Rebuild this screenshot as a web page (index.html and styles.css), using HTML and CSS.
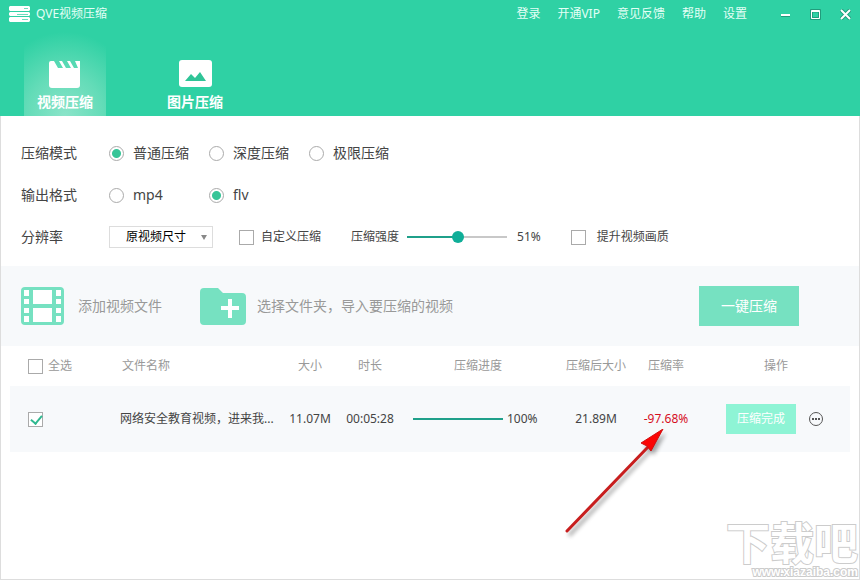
FILE: index.html
```html
<!DOCTYPE html>
<html lang="zh-CN">
<head>
    <meta charset="UTF-8">
    <meta name="viewport" content="width=device-width, initial-scale=1.0">
    <title>QVE视频压缩</title>
    <link rel="stylesheet" href="styles.css">
</head>
<body>
    <div class="window">
        <header class="header">
            <div class="title-bar">
                <svg class="logo" width="21" height="16" viewBox="0 0 21 16">
                    <path fill="#fff" d="M1 0h19l1 1v3l-1 1H1L0 4V1zM1 6h19l1 1v2l-1 1H1L0 9V7zM1 11h19l1 1v3l-1 1H1l-1-1v-3z"/>
                    <path stroke="#6fdcbc" d="M15 2.500h4M8 8.500h11M13 13.500h6"/>
                </svg>
                <span class="app-name">QVE视频压缩</span>
                <nav class="menu">
                    <a href="#">登录</a>
                    <a href="#">开通VIP</a>
                    <a href="#">意见反馈</a>
                    <a href="#">帮助</a>
                    <a href="#">设置</a>
                </nav>
                <div class="window-buttons">
                    <button type="button" aria-label="最小化">
                        <svg width="11" height="11" viewBox="0 0 11 11"><path stroke="#229c7c" d="M1 7.500h9"/><path stroke="#fff" stroke-width="2" d="M1 6h9"/></svg>
                    </button>
                    <button type="button" aria-label="最大化">
                        <svg width="11" height="11" viewBox="0 0 11 11"><path fill="none" stroke="#229c7c" d="M.5.5h10v10H.5zM2.500 3h6v5.500h-6z"/><path fill="none" stroke="#fff" d="M1.500 1.500h8v8h-8zM1 2.500h9"/></svg>
                    </button>
                    <button type="button" aria-label="关闭">
                        <svg width="11" height="11" viewBox="0 0 11 11"><path stroke="#229c7c" stroke-width="4" d="M1 1l9 9M10 1l-9 9"/><path stroke="#fff" stroke-width="2" d="M1 1l9 9M10 1l-9 9"/></svg>
                    </button>
                </div>
            </div>
            <div class="tabs">
                <button type="button" class="tab active">
                    <svg width="32" height="28" viewBox="0 0 32 28">
                        <path fill="#fff" d="M2 1h3l4 7h5l-4-7h3l4 7h5l-4-7h3l4 7h4l-3-7h5v24q0 3-3 3H3q-3 0-3-3V3q0-2 2-2z"/>
                    </svg>
                    <span>视频压缩</span>
                </button>
                <button type="button" class="tab">
                    <svg width="33" height="28" viewBox="0 0 33 28">
                        <rect width="33" height="27" rx="3" fill="#fff"/>
                        <path fill="#2fc497" d="M6 21l6-7 4 4 5-6 6 9z"/>
                    </svg>
                    <span>图片压缩</span>
                </button>
            </div>
        </header>

        <form class="settings">
            <div class="setting-row">
                <span class="setting-name">压缩模式</span>
                <label class="radio-option"><input type="radio" name="mode" checked>普通压缩</label>
                <label class="radio-option"><input type="radio" name="mode">深度压缩</label>
                <label class="radio-option"><input type="radio" name="mode">极限压缩</label>
            </div>
            <div class="setting-row">
                <span class="setting-name">输出格式</span>
                <label class="radio-option"><input type="radio" name="format">mp4</label>
                <label class="radio-option"><input type="radio" name="format" checked>flv</label>
            </div>
            <div class="setting-row">
                <label class="setting-name" for="resolution">分辨率</label>
                <div class="select-box">
                    <select id="resolution">
                        <option>原视频尺寸</option>
                    </select>
                </div>
                <label class="check-option custom"><input type="checkbox">自定义压缩</label>
                <div class="strength">
                    <label for="strength">压缩强度</label>
                    <input type="range" id="strength" min="0" max="100" value="51">
                    <output for="strength">51%</output>
                </div>
                <label class="check-option quality"><input type="checkbox">提升视频画质</label>
            </div>
        </form>

        <div class="actions">
            <button type="button" class="add-button">
                <svg width="43" height="38" viewBox="0 0 43 38">
                    <rect width="43" height="38" rx="4" fill="#76e1c1"/>
                    <path fill="#fff" d="M12 3h19v14H12zM12 21h19v14H12zM3 3h5v6H3zM3 12h5v5H3zM3 21h5v5H3zM3 29h5v6H3zM35 3h5v6h-5zM35 12h5v5h-5zM35 21h5v5h-5zM35 29h5v6h-5z"/>
                </svg>
                添加视频文件
            </button>
            <button type="button" class="add-button folder">
                <svg width="46" height="38" viewBox="0 0 46 38">
                    <path fill="#76e1c1" d="M4 1h14l5 5h19q4 0 4 4v24q0 4-4 4H4q-4 0-4-4V5q0-4 4-4z"/>
                    <path fill="#fff" d="M28 12h4v7h7v4h-7v8h-4v-8h-7v-4h7z"/>
                </svg>
                选择文件夹，导入要压缩的视频
            </button>
            <button type="button" class="start-button">一键压缩</button>
        </div>

        <table class="file-table">
            <colgroup>
                <col class="col-check">
                <col class="col-name">
                <col class="col-size">
                <col class="col-time">
                <col class="col-progress">
                <col class="col-after">
                <col class="col-rate">
                <col class="col-action">
            </colgroup>
            <thead>
                <tr>
                    <th class="check-cell"><label class="check-option"><input type="checkbox">全选</label></th>
                    <th class="name-cell">文件名称</th>
                    <th>大小</th>
                    <th>时长</th>
                    <th>压缩进度</th>
                    <th>压缩后大小</th>
                    <th>压缩率</th>
                    <th class="action-cell">操作</th>
                </tr>
            </thead>
            <tbody>
                <tr>
                    <td class="check-cell"><label class="check-option"><input type="checkbox" aria-label="网络安全教育视频" checked></label></td>
                    <td class="name-cell">网络安全教育视频，进来我...</td>
                    <td>11.07M</td>
                    <td>00:05:28</td>
                    <td>
                        <div class="progress">
                            <div class="progress-track"><div class="progress-bar" style="width: 100%"></div></div>
                            <span>100%</span>
                        </div>
                    </td>
                    <td>21.89M</td>
                    <td class="rate">
                        -97.68%
                        <svg class="arrow" width="110" height="116" viewBox="0 0 110 116">
                            <path class="arrow-shadow" d="M1 101L82 17l-5-3L99 0 87 22l-3-3L3 104z"/>
                            <path stroke="#c81e1e" stroke-width="3" stroke-linecap="round" d="M3 102L84 18"/>
                            <path fill="#fb0505" stroke="#d01010" d="M99 0L77 14l6 3 4 5z"/>
                        </svg>
                    </td>
                    <td>
                        <div class="row-actions">
                            <button type="button" class="done-button">压缩完成</button>
                            <button type="button" class="more-button" aria-label="更多">
                                <svg width="16" height="16" viewBox="0 0 16 16">
                                    <circle cx="8" cy="8" r="6.500" fill="none" stroke="#555"/>
                                    <path fill="#555" d="M4 7h2v2H4zM7 7h2v2H7zM10 7h2v2h-2z"/>
                                </svg>
                            </button>
                        </div>
                    </td>
                </tr>
            </tbody>
        </table>

        <div class="watermark">
            <div class="watermark-name">下载吧</div>
            <div class="watermark-url">www.xiazaiba.com</div>
        </div>
    </div>
</body>
</html>
```

FILE: styles.css
```css
* {
    box-sizing: border-box;
}

body {
    margin: 0;
    font-family: "Noto Sans", "Noto Sans CJK SC", sans-serif;
    font-size: 12px;
    line-height: 20px;
    color: #444;
    background-color: #fff;
}

button {
    padding: 0;
    border: none;
    background: none;
    font: inherit;
    color: inherit;
    cursor: pointer;
}

svg {
    display: block;
}

.window {
    position: relative;
    min-height: 100vh;
    border: 1px solid #ddd;
    border-top: none;
}

/* Header */
.header {
    margin: 0 -1px;
    color: #fff;
    background-color: #2fd1a4;
}

.title-bar {
    display: flex;
    align-items: center;
    height: 28px;
    padding-left: 9px;
}

.app-name {
    margin-left: 6px;
    color: #e4fff6;
}

.menu {
    display: flex;
    gap: 17px;
    margin-left: auto;
    margin-right: 23px;
}

.menu a {
    color: #e4fff6;
    text-decoration: none;
}

.window-buttons {
    display: flex;
}

.window-buttons button {
    display: flex;
    justify-content: center;
    width: 30px;
}

.tabs {
    display: flex;
    gap: 48px;
    padding-left: 24px;
}

.tab {
    display: flex;
    flex-direction: column;
    align-items: center;
    gap: 4px;
    width: 82px;
    height: 88px;
    padding-top: 32px;
    font-size: 14px;
    font-weight: bold;
}

.tab.active {
    background: radial-gradient(ellipse 76px 84px at 50% 100%, #8be4c9, #64dcb8 50%, rgba(47, 209, 164, 0));
}

/* Settings */
.settings {
    padding: 16px 20px 8px;
}

.setting-row {
    display: flex;
    align-items: center;
    height: 42px;
}

.setting-name {
    width: 88px;
    font-size: 14px;
}

.radio-option {
    display: flex;
    align-items: center;
    gap: 9px;
    width: 100px;
    font-size: 14px;
}

input[type="radio"],
input[type="checkbox"] {
    appearance: none;
    flex: none;
    width: 15px;
    height: 15px;
    margin: 0;
    border: 1px solid #aaa;
    background-color: #fff;
}

input[type="radio"] {
    border-radius: 50%;
}

input[type="radio"]:checked {
    background: radial-gradient(circle, #38c598 4px, #fff 5px);
}

input[type="checkbox"]:checked::before {
    content: "";
    display: block;
    width: 5px;
    height: 9px;
    margin: 0 0 0 4px;
    border: solid #2fb890;
    border-width: 0 2px 2px 0;
    transform: rotate(40deg);
}

.check-option {
    display: flex;
    align-items: center;
    gap: 7px;
}

.select-box {
    position: relative;
    width: 104px;
}

.select-box::after {
    content: "";
    position: absolute;
    top: 9px;
    right: 6px;
    border: 3px solid transparent;
    border-top: 5px solid #888;
    border-bottom: none;
}

select {
    appearance: none;
    display: block;
    width: 100%;
    height: 22px;
    padding: 0 16px;
    border: 1px solid #ddd;
    border-radius: 0;
    background-color: #fff;
    color: #000;
    font: inherit;
}

.custom {
    margin-left: 26px;
}

.strength {
    display: flex;
    align-items: center;
    margin-left: 30px;
}

.strength output {
    margin-left: 10px;
}

input[type="range"] {
    appearance: none;
    width: 100px;
    height: 12px;
    margin: 0 0 0 8px;
    background: linear-gradient(to right, #1fa08a 51%, #c8c8c8 51%) center / 100% 2px no-repeat;
}

input[type="range"]::-webkit-slider-thumb {
    appearance: none;
    width: 12px;
    height: 12px;
    border-radius: 50%;
    background-color: #0fae98;
}

.quality {
    gap: 11px;
    margin-left: 30px;
}

/* Add files / start */
.actions {
    display: flex;
    align-items: center;
    height: 80px;
    padding: 0 60px 0 20px;
    background-color: #f7f9fb;
}

.add-button {
    display: flex;
    align-items: center;
    gap: 14px;
    font-size: 14px;
    color: #999;
}

.folder {
    gap: 11px;
    margin-left: 38px;
}

.start-button {
    width: 100px;
    height: 40px;
    margin-left: auto;
    font-size: 14px;
    color: #fff;
    background-color: #76e1c1;
}

/* File list */
.file-table {
    width: calc(100% - 18px);
    margin: 0 9px;
    table-layout: fixed;
    border-collapse: collapse;
}

.col-check {
    width: 110px;
}

.col-size,
.col-time,
.col-rate {
    width: 60px;
}

.col-progress {
    width: 156px;
}

.col-after {
    width: 80px;
}

.col-action {
    width: 154px;
}

th,
td {
    padding: 0;
    text-align: center;
    white-space: nowrap;
}

th {
    height: 40px;
    font-weight: normal;
    color: #999;
}

td {
    height: 66px;
    background-color: #f7f9fb;
}

.check-cell {
    padding-left: 18px;
}

.check-cell .check-option {
    gap: 5px;
}

.name-cell {
    text-align: left;
}

th.name-cell {
    padding-left: 2px;
}

.action-cell {
    padding-left: 6px;
}

.progress {
    display: flex;
    align-items: center;
    gap: 4px;
    padding-left: 13px;
}

.progress-track {
    width: 90px;
    background-color: #ccc;
}

.progress-bar {
    height: 2px;
    background-color: #1fa08a;
}

.rate {
    position: relative;
    color: #d60f1f;
}

.arrow {
    position: absolute;
    top: 43px;
    left: -72px;
    z-index: 1;
}

.arrow-shadow {
    fill: #000;
    opacity: 0.35;
    transform: translate(3px, 4px);
    filter: blur(2px);
}

.row-actions {
    display: flex;
    align-items: center;
    gap: 12px;
    padding-left: 30px;
}

.done-button {
    width: 70px;
    height: 30px;
    color: #fff;
    background-color: #8ef4d5;
}

/* Site mark over the bottom corner */
.watermark {
    position: absolute;
    right: 1px;
    bottom: 0;
    color: #fff;
    text-align: right;
    -webkit-text-stroke: 2px #ccc;
    paint-order: stroke fill;
}

.watermark-name {
    font-size: 44px;
    font-weight: bold;
    line-height: 44px;
}

.watermark-url {
    font-family: "Liberation Sans", sans-serif;
    font-size: 12px;
    font-weight: bold;
    line-height: 14px;
}
```
